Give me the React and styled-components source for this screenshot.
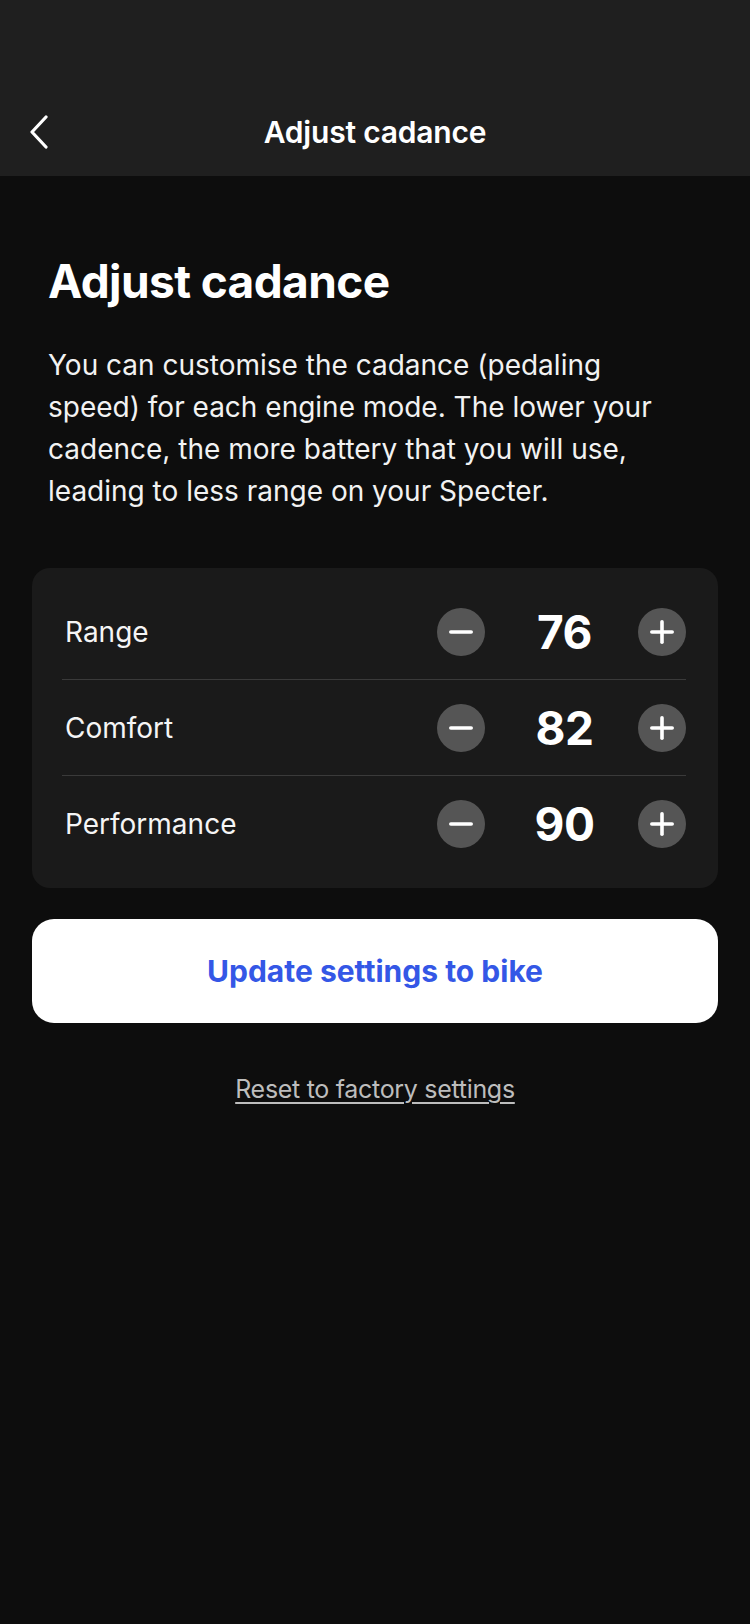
import React from "react";
import styled, { createGlobalStyle } from "styled-components";

const GlobalStyle = createGlobalStyle`
  html, body {
    margin: 0;
    padding: 0;
    background: #0d0d0d;
  }
  body {
    font-family: Inter, "Noto Sans", "Liberation Sans", sans-serif;
    color: #fff;
    -webkit-font-smoothing: antialiased;
  }
`;

const modes = [
  { name: "Range", value: 76 },
  { name: "Comfort", value: 82 },
  { name: "Performance", value: 90 },
];

const App = () => (
  <Page>
    <GlobalStyle />
    <Header>
      <BackButton aria-label="Back">
        <svg width="22" height="34" viewBox="0 0 22 34" fill="none">
          <path
            d="M18 2L4 17L18 32"
            stroke="#fff"
            strokeWidth="3.2"
            strokeLinecap="round"
            strokeLinejoin="round"
          />
        </svg>
      </BackButton>
      <HeaderTitle>Adjust cadance</HeaderTitle>
    </Header>

    <Content>
      <Title>Adjust cadance</Title>
      <Description>
        You can customise the cadance (pedaling speed) for each engine mode.
        The lower your cadence, the more battery that you will use, leading to
        less range on your Specter.
      </Description>

      <Card>
        {modes.map((m, i) => (
          <Row key={m.name} $last={i === modes.length - 1}>
            <Label>{m.name}</Label>
            <Stepper>
              <RoundButton aria-label="Decrease">
                <svg width="26" height="26" viewBox="0 0 26 26">
                  <rect x="1" y="11.2" width="24" height="3.6" rx="1.8" fill="#fff" />
                </svg>
              </RoundButton>
              <Value>{m.value}</Value>
              <RoundButton aria-label="Increase">
                <svg width="26" height="26" viewBox="0 0 26 26">
                  <rect x="1" y="11.2" width="24" height="3.6" rx="1.8" fill="#fff" />
                  <rect x="11.2" y="1" width="3.6" height="24" rx="1.8" fill="#fff" />
                </svg>
              </RoundButton>
            </Stepper>
          </Row>
        ))}
      </Card>

      <PrimaryButton>Update settings to bike</PrimaryButton>
      <ResetLink href="#">Reset to factory settings</ResetLink>
    </Content>
  </Page>
);

const Page = styled.div`
  min-height: 1624px;
  background: #0d0d0d;
`;

const Header = styled.header`
  position: relative;
  height: 176px;
  background: #1f1f1f;
  display: flex;
  align-items: flex-end;
  justify-content: center;
  padding-bottom: 26px;
  box-sizing: border-box;
`;

const BackButton = styled.button`
  position: absolute;
  left: 26px;
  bottom: 26px;
  background: none;
  border: 0;
  padding: 0;
  width: 26px;
  height: 36px;
  display: flex;
  align-items: center;
  justify-content: center;
`;

const HeaderTitle = styled.h2`
  margin: 0;
  font-size: 30px;
  font-weight: 600;
  line-height: 36px;
  letter-spacing: -0.2px;
`;

const Content = styled.main`
  padding: 78px 32px 0;
  display: flex;
  flex-direction: column;
`;

const Title = styled.h1`
  margin: 0 0 0 16px;
  font-size: 46px;
  font-weight: 700;
  line-height: 54px;
  letter-spacing: -0.6px;
`;

const Description = styled.p`
  margin: 36px 16px 0;
  max-width: 620px;
  font-size: 28px;
  font-weight: 400;
  line-height: 42px;
  letter-spacing: 0;
  color: #f2f2f2;
`;

const Card = styled.section`
  margin-top: 56px;
  background: #1a1a1a;
  border-radius: 18px;
  padding: 16px 32px 16px 30px;
`;

const Row = styled.div`
  height: 96px;
  display: flex;
  align-items: center;
  justify-content: space-between;
  border-bottom: ${(p) => (p.$last ? "none" : "1.5px solid #3a3a3a")};
  box-sizing: border-box;
`;

const Label = styled.span`
  padding-left: 3px;
  font-size: 28px;
  letter-spacing: 0;
  color: #f5f5f5;
`;

const Stepper = styled.div`
  display: flex;
  align-items: center;
`;

const RoundButton = styled.button`
  width: 48px;
  height: 48px;
  border-radius: 50%;
  border: 0;
  padding: 0;
  background: #555555;
  display: flex;
  align-items: center;
  justify-content: center;
`;

const Value = styled.span`
  width: 153px;
  padding-left: 6px;
  box-sizing: border-box;
  text-align: center;
  font-size: 46px;
  font-weight: 700;
  letter-spacing: -0.5px;
  color: #fff;
`;

const PrimaryButton = styled.button`
  margin-top: 31px;
  height: 104px;
  border: 0;
  border-radius: 22px;
  background: #ffffff;
  color: #3457e6;
  font-family: inherit;
  font-size: 30px;
  font-weight: 700;
  letter-spacing: 0;
`;

const ResetLink = styled.a`
  margin-top: 50px;
  align-self: center;
  font-size: 25px;
  line-height: 32px;
  color: #bdbdbd;
  text-decoration: underline;
  text-underline-offset: 4px;
  text-decoration-thickness: 1.5px;
  letter-spacing: -0.3px;
`;

export default App;
